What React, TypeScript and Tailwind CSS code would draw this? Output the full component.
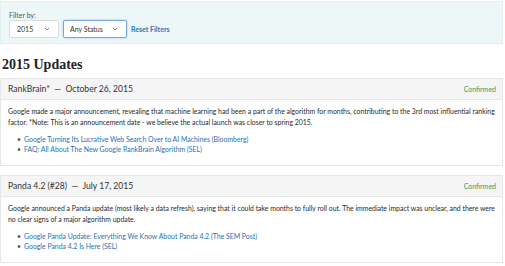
import React from 'react';

interface Update {
  title: string;
  date: string;
  status: string;
  body: string;
  links: string[];
}

const updates: Update[] = [
  {
    title: 'RankBrain*',
    date: 'October 26, 2015',
    status: 'Confirmed',
    body: 'Google made a major announcement, revealing that machine learning had been a part of the algorithm for months, contributing to the 3rd most influential ranking factor. *Note: This is an announcement date - we believe the actual launch was closer to spring 2015.',
    links: [
      'Google Turning Its Lucrative Web Search Over to AI Machines (Bloomberg)',
      'FAQ: All About The New Google RankBrain Algorithm (SEL)',
    ],
  },
  {
    title: 'Panda 4.2 (#28)',
    date: 'July 17, 2015',
    status: 'Confirmed',
    body: 'Google announced a Panda update (most likely a data refresh), saying that it could take months to fully roll out. The immediate impact was unclear, and there were no clear signs of a major algorithm update.',
    links: [
      'Google Panda Update: Everything We Know About Panda 4.2 (The SEM Post)',
      'Google Panda 4.2 Is Here (SEL)',
    ],
  },
];

const Chevron = () => (
  <svg width="6" height="4" viewBox="0 0 6 4" fill="none" className="text-gray-500">
    <path d="M0.8 0.8l2.2 2.2L5.2 0.8" stroke="currentColor" strokeWidth="0.9" />
  </svg>
);

const App: React.FC = () => {
  return (
    <div className="w-[505px] h-[266px] overflow-hidden bg-white pr-[2px] pt-[1px] font-['Lato','Open_Sans',sans-serif] text-[#333]">
      <div className="h-[43px] border border-[#e3eeee] bg-[#eef7f7] px-[8px] pt-[9px]">
        <div className="text-[7px] leading-[9px] text-[#555]">Filter by:</div>
        <div className="flex items-center gap-[4px]">
          <div className="flex h-[18px] w-[50px] items-center justify-between rounded-[2px] border border-[#dcdcdc] bg-white pl-[7px] pr-[8px] text-[7px] text-[#333]">
            <span>2015</span>
            <Chevron />
          </div>
          <div className="flex h-[18px] w-[64px] items-center justify-between rounded-[2px] border border-[#7aa7e0] bg-white pl-[6px] pr-[8px] text-[7px] text-[#333] shadow-[0_0_2px_rgba(80,140,220,0.6)]">
            <span>Any Status</span>
            <Chevron />
          </div>
          <span className="text-[7px] font-bold text-[#2b78b6]">Reset Filters</span>
        </div>
      </div>

      <h2 className="mt-[12px] pl-[2px] font-['Liberation_Serif',serif] text-[14px] leading-[18px] font-bold text-[#222]">
        2015 Updates
      </h2>

      <div className="mt-[4px] flex flex-col gap-[9px]">
        {updates.map((u) => (
          <div key={u.title} className="border border-[#e6e6e6] bg-white">
            <div className="flex h-[21px] items-center justify-between border-b border-[#e6e6e6] bg-[#f5f5f5] pl-[7px] pr-[6px]">
              <span className="text-[8.6px] text-[#333]">
                {u.title} &nbsp;—&nbsp; {u.date}
              </span>
              <span className="text-[7px] text-[#3a9a55]">{u.status}</span>
            </div>
            <div className="pl-[7px] pr-[4px] pt-[6px] pb-[11px]">
              <p className="text-[6.9px] leading-[10.5px] text-[#2a2a2a]">{u.body}</p>
              <ul className="mt-[7px] pl-[9px] text-[6.9px] leading-[10px]">
                {u.links.map((l) => (
                  <li key={l} className="flex items-center gap-[3px]">
                    <span className="text-[#555]">•</span>
                    <span className="text-[#2b6fb3]">{l}</span>
                  </li>
                ))}
              </ul>
            </div>
          </div>
        ))}
      </div>
    </div>
  );
};

export default App;
